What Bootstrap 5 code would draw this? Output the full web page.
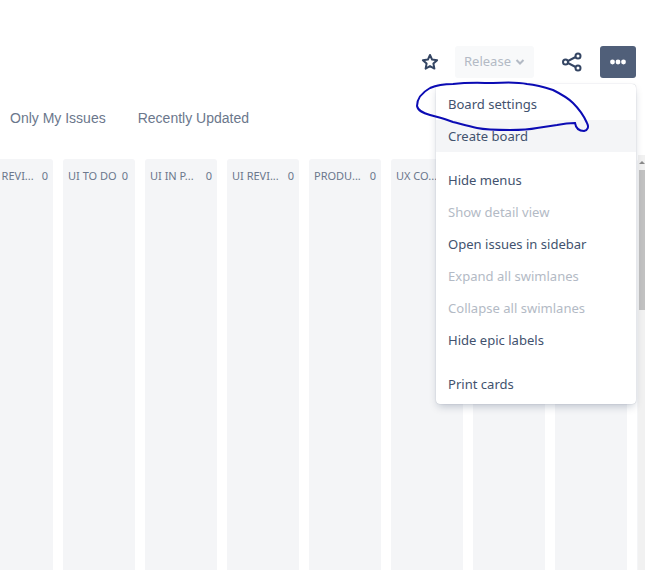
<!DOCTYPE html>
<html lang="en">
<head>
  <meta charset="UTF-8">
  <meta name="viewport" content="width=device-width, initial-scale=1.0">
  <title>Board</title>
  <link href="https://cdn.jsdelivr.net/npm/bootstrap@5.3.2/dist/css/bootstrap.min.css" rel="stylesheet">
  <style>
    html, body { height: 100%; overflow: hidden; background: #fff; }
    body { font-family: "Noto Sans", sans-serif; font-size: 14px; color: #172b4d; position: relative; }
    .page-wrap { height: 570px; overflow: hidden; }
    .top-bar { padding: 46px 9px 0 0; height: 78px; }
    .star-btn { width: 20px; height: 32px; margin-right: 15px; }
    .release-btn, .release-btn:disabled { width: 79px; height: 32px; padding: 0; border: 0; border-radius: 3px; background: #f8f9fa; color: #b3bac5; opacity: 1; font-size: 13px; font-family: "Noto Sans", sans-serif; }
    .share-btn { width: 24px; height: 32px; margin: 0 16px 0 26px; }
    .more-btn, .more-btn:hover { width: 36px; height: 32px; padding: 0; border: 0; border-radius: 3px; background: #505f79; }
    .filter-bar { height: 81px; padding: 30px 0 0 10px; gap: 32px; font-family: "Liberation Sans", sans-serif; color: #6b778c; font-size: 14px; line-height: 20px; }
    .board-cols { margin-left: -19px; gap: 10px; flex: 1; min-height: 0; }
    .board-col { flex: 0 0 72px; background: #f4f5f7; border-radius: 3px 3px 0 0; padding: 9px 5px 0; font-size: 11px; line-height: 16px; color: #6b778c; }
    .col-name { white-space: nowrap; overflow: hidden; flex-shrink: 0; }
    .col-count-tight { margin-right: 2px; }
    .more-menu { display: block; top: 84px; left: 436px; width: 200px; padding: 4px 0; border: 0; border-radius: 4px; box-shadow: 0 4px 8px -2px rgba(9,30,66,.25), 0 0 1px rgba(9,30,66,.31); font-size: 13.05px; }
    .more-menu .dropdown-item { height: 32px; padding: 0 12px; line-height: 32px; color: #42526e; }
    .more-menu .dropdown-item.hovered { background: #f4f5f7; }
    .more-menu .dropdown-item.disabled { color: #b3bac5; }
    .menu-gap { height: 12px; }
    .page-scroll { top: 155px; left: 638px; width: 7px; bottom: 0; background: #f1f1f1; }
    .page-scroll-arrow { margin: 6px 0 0 1px; width: 0; height: 0; border-left: 3px solid transparent; border-right: 3px solid transparent; border-bottom: 3px solid #8a8a8a; }
    .page-scroll-thumb { margin-top: 6px; height: 140px; margin-left: 1px; background: #c1c1c1; }
    .pen-mark { top: 0; left: 0; pointer-events: none; z-index: 1010; }
  </style>
</head>
<body>
  <div class="page-wrap d-flex flex-column">
    <div class="top-bar d-flex justify-content-end align-items-center flex-shrink-0">
      <div class="star-btn d-flex align-items-center justify-content-center">
        <svg width="18" height="18" viewBox="0 0 18 18"><path d="M9 2l2.100 4.600 5 .6-3.700 3.400 1 5L9 13.100l-4.400 2.500 1-5L1.900 7.200l5-.6z" fill="none" stroke="#344563" stroke-width="2" stroke-linejoin="round"/></svg>
      </div>
      <button class="release-btn btn d-flex align-items-center justify-content-center gap-1" type="button" disabled>Release
        <svg width="10" height="8" viewBox="0 0 10 8"><path d="M1.500 2l3.500 3.500L8.500 2" fill="none" stroke="#b3bac5" stroke-width="2"/></svg>
      </button>
      <div class="share-btn d-flex align-items-center justify-content-center">
        <svg width="22" height="20" viewBox="0 0 22 20"><path d="M16.500 4L5 10l11.500 6" fill="none" stroke="#344563" stroke-width="2"/><circle cx="17" cy="4" r="2.500" fill="#fff" stroke="#344563" stroke-width="2"/><circle cx="4.500" cy="10" r="2.500" fill="#fff" stroke="#344563" stroke-width="2"/><circle cx="17" cy="16" r="2.500" fill="#fff" stroke="#344563" stroke-width="2"/></svg>
      </div>
      <button class="more-btn btn d-flex align-items-center justify-content-center" type="button">
        <svg width="18" height="6" viewBox="0 0 18 6"><circle cx="3.500" cy="3" r="2.400" fill="#fff"/><circle cx="9" cy="3" r="2.400" fill="#fff"/><circle cx="14.500" cy="3" r="2.400" fill="#fff"/></svg>
      </button>
    </div>

    <div class="filter-bar d-flex flex-shrink-0">
      <span>Only My Issues</span>
      <span>Recently Updated</span>
    </div>

    <div class="board-cols d-flex">
      <div class="board-col d-flex justify-content-end gap-2"><span class="col-name">E REVI...</span><span>0</span></div>
      <div class="board-col d-flex justify-content-between"><span class="col-name">UI TO DO</span><span class="col-count-tight">0</span></div>
      <div class="board-col d-flex justify-content-between"><span class="col-name">UI IN P...</span><span>0</span></div>
      <div class="board-col d-flex justify-content-between"><span class="col-name">UI REVI...</span><span>0</span></div>
      <div class="board-col d-flex justify-content-between"><span class="col-name">PRODU...</span><span>0</span></div>
      <div class="board-col d-flex justify-content-between"><span class="col-name">UX CO...</span></div>
      <div class="board-col"></div>
      <div class="board-col"></div>
      <div class="board-col"></div>
    </div>
  </div>

  <div class="page-scroll position-absolute"><div class="page-scroll-arrow"></div><div class="page-scroll-thumb"></div></div>

  <div class="dropdown-menu more-menu">
    <a class="dropdown-item" href="#">Board settings</a>
    <a class="dropdown-item hovered" href="#">Create board</a>
    <div class="menu-gap"></div>
    <a class="dropdown-item" href="#">Hide menus</a>
    <a class="dropdown-item disabled" href="#">Show detail view</a>
    <a class="dropdown-item" href="#">Open issues in sidebar</a>
    <a class="dropdown-item disabled" href="#">Expand all swimlanes</a>
    <a class="dropdown-item disabled" href="#">Collapse all swimlanes</a>
    <a class="dropdown-item" href="#">Hide epic labels</a>
    <div class="menu-gap"></div>
    <a class="dropdown-item" href="#">Print cards</a>
  </div>

  <!-- hand drawn circle around Board settings -->
  <svg class="pen-mark position-absolute" width="645" height="570" viewBox="0 0 645 570">
    <path d="M430 88C437 85 445 84 453 84C470 82 482 83 493 83C508 82 518 82 527 84C538 85 547 88 553 90C561 94 568 98 573 103C579 109 584 116 587 123C589 127 588 130 584 131C580 131 576 129 575 123C567 123 562 124 557 125C550 126 544 127 537 128C527 130 518 130 510 130C498 130 487 130 477 128C468 126 461 124 453 122C445 119 437 117 430 115C423 113 418 111 417 106C417 98 423 92 430 88" fill="none" stroke="#0b0bb4" stroke-width="2"/>
  </svg>

  <script src="https://cdn.jsdelivr.net/npm/bootstrap@5.3.2/dist/js/bootstrap.bundle.min.js"></script>
</body>
</html>
